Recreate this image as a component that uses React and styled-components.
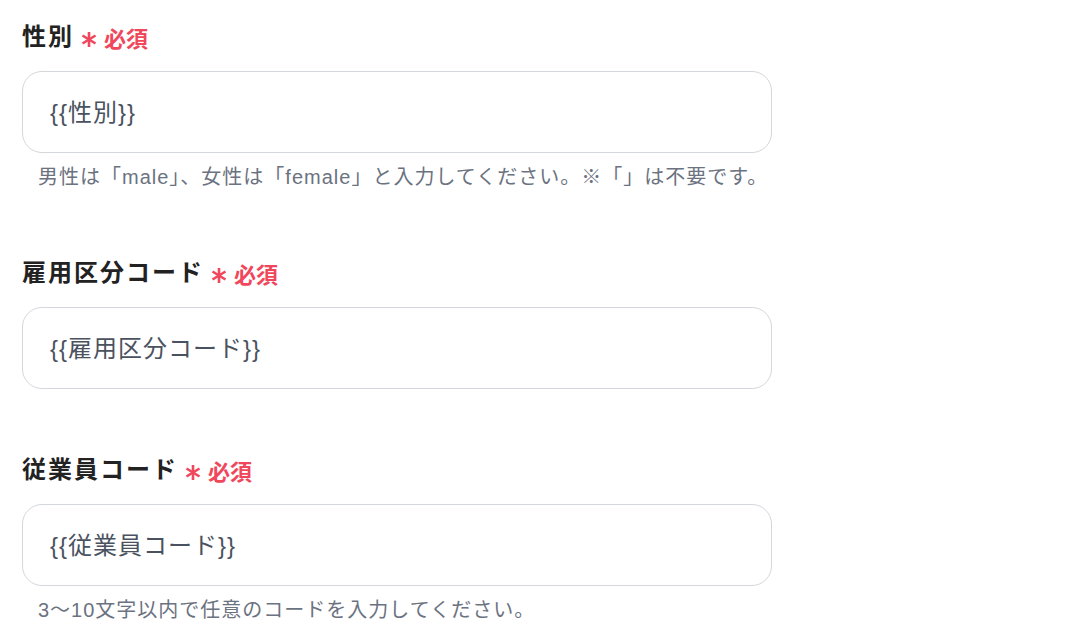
import React from "react";
import styled, { createGlobalStyle } from "styled-components";

const GlobalStyle = createGlobalStyle`
  body {
    margin: 0;
    background: #ffffff;
    font-family: "Liberation Sans", "Noto Sans CJK JP", sans-serif;
  }
`;

const Form = styled.div`
  display: flex;
  flex-direction: column;
  padding: 20px 0 0 22px;
  width: 750px;
`;

const Field = styled.div`
  display: flex;
  flex-direction: column;
  margin-bottom: 64px;
  &:last-child {
    margin-bottom: 0;
  }
`;

const LabelRow = styled.div`
  display: flex;
  align-items: center;
  height: 30px;
  margin-bottom: 21px;
`;

const Label = styled.span`
  font-family: "Noto Sans CJK JP", sans-serif;
  font-weight: 700;
  font-size: 24px;
  letter-spacing: 2px;
  line-height: 30px;
  color: #222222;
`;

const Required = styled.span`
  display: flex;
  align-items: center;
  gap: 7px;
  margin-left: 7px;
  color: #f0475c;
  font-family: "Noto Sans CJK JP", sans-serif;
  font-weight: 700;
  font-size: 22px;
  line-height: 30px;
  padding-top: 3px;
`;

const Star = styled.svg`
  width: 16px;
  height: 17px;
  margin-top: 6px;
`;

const Input = styled.div`
  box-sizing: border-box;
  height: 82px;
  border: 1px solid #d4d7dc;
  border-radius: 20px;
  padding: 0 27px 3px;
  display: flex;
  align-items: center;
  font-family: "Liberation Sans", "Noto Sans CJK JP", sans-serif;
  font-size: 24px;
  letter-spacing: 1px;
  color: #4a5260;
`;

const Help = styled.p`
  margin: 12px 0 3px 16px;
  font-size: 20px;
  letter-spacing: 1px;
  line-height: 24px;
  color: #6b7280;
  white-space: nowrap;
`;

const Asterisk = () => (
  <Star viewBox="0 0 16 17">
    <g stroke="currentColor" strokeWidth="2.6" strokeLinecap="butt">
      <line x1="8" y1="1" x2="8" y2="16" />
      <line x1="1.5" y1="4.5" x2="14.5" y2="12.5" />
      <line x1="14.5" y1="4.5" x2="1.5" y2="12.5" />
    </g>
  </Star>
);

const fields = [
  {
    label: "性別",
    value: "{{性別}}",
    help: "男性は「male」、女性は「female」と入力してください。※「」は不要です。",
  },
  { label: "雇用区分コード", value: "{{雇用区分コード}}" },
  {
    label: "従業員コード",
    value: "{{従業員コード}}",
    help: "3〜10文字以内で任意のコードを入力してください。",
  },
];

const App = () => {
  return (
    <>
      <GlobalStyle />
      <Form>
        {fields.map((f) => (
          <Field key={f.label}>
            <LabelRow>
              <Label>{f.label}</Label>
              <Required>
                <Asterisk />
                必須
              </Required>
            </LabelRow>
            <Input>{f.value}</Input>
            {f.help && <Help>{f.help}</Help>}
          </Field>
        ))}
      </Form>
    </>
  );
};

export default App;
